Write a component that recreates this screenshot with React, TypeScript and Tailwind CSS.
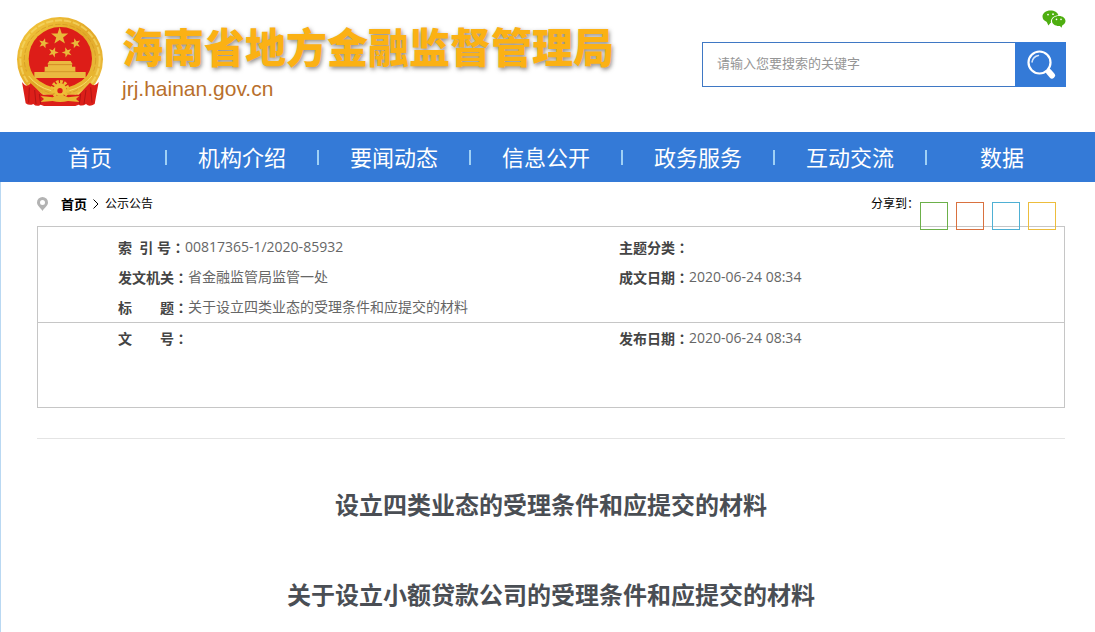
import type { ReactNode } from "react";

const navItems = ["首页", "机构介绍", "要闻动态", "信息公开", "政务服务", "互动交流", "数据"];

const shareLinks = [
  { name: "微信", border: "border-[#6cb04a]" },
  { name: "微博", border: "border-[#d9713f]" },
  { name: "QQ", border: "border-[#4fb0d4]" },
  { name: "QQ空间", border: "border-[#edbd3c]" },
];

function starPoints(cx: number, cy: number, r: number, turn = 0) {
  return Array.from({ length: 10 }, (_, i) => {
    const radius = i % 2 === 0 ? r : r * 0.4;
    const a = ((i * 36 - 90 + turn) * Math.PI) / 180;
    return `${(cx + radius * Math.cos(a)).toFixed(1)},${(cy + radius * Math.sin(a)).toFixed(1)}`;
  }).join(" ");
}

function Emblem() {
  return (
    <svg viewBox="48 48 264 276" className="h-[92px] w-[88px] shrink-0" aria-hidden="true">
      <defs>
        <linearGradient id="gold" x1="0" y1="0" x2="1" y2="1">
          <stop offset="0" stopColor="#f4c93f" />
          <stop offset="0.5" stopColor="#e3a928" />
          <stop offset="1" stopColor="#efc445" />
        </linearGradient>
      </defs>
      {/* Wheat wreath */}
      <ellipse cx="180" cy="178" rx="129" ry="127" fill="url(#gold)" />
      <ellipse cx="180" cy="178" rx="119" ry="117" fill="none" stroke="#f5d868" strokeOpacity="0.7" strokeWidth="6" strokeDasharray="22 5" />
      <ellipse cx="180" cy="178" rx="107" ry="105" fill="none" stroke="#cf9220" strokeOpacity="0.6" strokeWidth="3" strokeDasharray="16 6" />
      <circle cx="181" cy="176" r="95" fill="#dd1d18" />
      {/* Drapery */}
      <path
        d="M66 246 Q80 266 92 250 L128 284 L236 284 L270 248 Q284 264 296 246 L284 312 Q268 322 258 312 Q246 320 236 314 L226 318 L132 318 L122 314 Q110 322 100 312 Q88 318 77 310 Z"
        fill="#dc1f19"
      />
      <path d="M88 262 L86 308 M104 270 L108 312 M118 282 L122 312 M272 262 L276 308 M258 270 L252 312 M242 282 L238 312" stroke="#b31413" strokeWidth="3" fill="none" />
      {/* Stalks crossing under the gate */}
      <path d="M80 214 Q108 256 160 270 M282 214 Q254 256 202 270" stroke="#e8b52f" strokeWidth="14" fill="none" />
      <path d="M86 228 Q112 262 154 272 M276 228 Q250 262 208 272" stroke="#f7dc6a" strokeWidth="3" fill="none" />
      <circle cx="180" cy="268" r="23" fill="none" stroke="#edbb35" strokeWidth="10" strokeDasharray="8 4" />
      <circle cx="180" cy="268" r="19" fill="#efbe37" />
      <circle cx="180" cy="272" r="8" fill="#dd1d18" />
      <path d="M122 288 L158 292 Q180 278 204 292 L238 288 L228 297 L238 306 L204 303 Q180 309 158 303 L122 306 L132 297 Z" fill="#e9b633" />
      {/* Stars */}
      <g fill="#e9b93a">
        <polygon points={starPoints(179, 109, 27)} />
        <polygon points={starPoints(131, 130, 16, 15)} />
        <polygon points={starPoints(227, 130, 16, -15)} />
        <polygon points={starPoints(160, 157, 16, 20)} />
        <polygon points={starPoints(201, 157, 16, -20)} />
      </g>
      {/* Gate */}
      <g fill="#ebb940">
        <path d="M148 183 H212 L218 193 H142 Z" />
        <path d="M144 193 H216 V200 H226 V216 H134 V200 H144 Z" />
        <path d="M103 216 H257 V234 H103 Z" />
      </g>
      <path d="M144 194 H216 M134 215 H226" stroke="#c98a20" strokeWidth="2" />
    </svg>
  );
}

function WechatIcon() {
  return (
    <svg viewBox="0 0 24 18" className="h-[18px] w-6" aria-hidden="true">
      <path d="M8.5 0.5 C3.8 0.5 0.5 3.2 0.5 6.5 C0.5 8.8 2 10.8 4.5 11.8 L5 12.4 L6.4 15.4 L8.4 12.9 L9 12.8 C8.2 8.6 11.6 5.4 16.4 5.2 C15.6 2.4 12.4 0.5 8.5 0.5 Z" fill="#4eae10" />
      <path d="M17 6 C12.9 6 10 8.2 10 11 C10 13.8 12.9 16 17 16 L18 16 L19.4 17.8 L20.4 15.2 C22.2 14.4 23.5 12.8 23.5 11 C23.5 8.2 20.8 6 17 6 Z" fill="#4eae10" />
      <g fill="#fff">
        <circle cx="6" cy="4.6" r="0.9" />
        <circle cx="11" cy="4.2" r="0.9" />
        <circle cx="14.5" cy="9.4" r="0.8" />
        <circle cx="19" cy="9.4" r="0.8" />
      </g>
    </svg>
  );
}

function SearchIcon() {
  return (
    <svg viewBox="0 0 30 30" className="h-[30px] w-[30px]" fill="none" aria-hidden="true">
      <circle cx="13.5" cy="12.5" r="11" stroke="#fff" strokeWidth="2.2" />
      <path d="M6 12 Q7 6.5 12.5 5.5" stroke="#d4e5fb" strokeWidth="1.5" strokeLinecap="round" />
      <path d="M21 20 L23 22" stroke="#fff" strokeWidth="3" />
      <path d="M23 22 L26 25.5" stroke="#fff" strokeWidth="6" strokeLinecap="round" />
    </svg>
  );
}

function PinIcon() {
  return (
    <svg viewBox="0 0 11 14" className="h-[14px] w-[11px]" aria-hidden="true">
      <path
        d="M5.5 0 A5.5 5.5 0 0 1 11 5.5 C11 8.8 7.4 10.8 5.5 14 C3.6 10.8 0 8.8 0 5.5 A5.5 5.5 0 0 1 5.5 0 Z M5.5 3 A2.5 2.5 0 1 0 5.5 8 A2.5 2.5 0 1 0 5.5 3 Z"
        fill="#b3b3b3"
        fillRule="evenodd"
      />
    </svg>
  );
}

function Field({ label, children }: { label: string; children?: ReactNode }) {
  return (
    <div className="flex h-[30px]">
      <dt className="font-bold whitespace-pre text-[#444]">
        {label}
        <span className="font-['Noto_Sans_CJK_TC',sans-serif]">：</span>
      </dt>
      <dd>{children}</dd>
    </div>
  );
}

export default function App() {
  return (
    <div className="flex min-h-screen flex-col bg-white font-['Open_Sans','Noto_Sans_CJK_SC',sans-serif] text-black">
      <header className="flex h-[132px] items-start justify-between pr-[29px] pl-4">
        <a href="#" className="flex gap-[18px] pt-4">
          <Emblem />
          <div className="pt-[3px]">
            <h1 className="text-[41px] leading-[56px] font-black whitespace-nowrap text-[#fbb114] [text-shadow:1px_2px_4px_rgba(70,65,60,0.6)]">
              海南省地方金融监督管理局
            </h1>
            <p className="font-['Liberation_Sans',sans-serif] text-[21px] leading-7 text-[#b86f2c]">jrj.hainan.gov.cn</p>
          </div>
        </a>
        <div className="flex w-[364px] flex-col pt-[10px]">
          <a href="#" aria-label="微信" className="self-end">
            <WechatIcon />
          </a>
          <form className="mt-[14px] flex h-[45px]" onSubmit={(e) => e.preventDefault()}>
            <input
              type="text"
              aria-label="搜索"
              placeholder="请输入您要搜索的关键字"
              className="min-w-0 flex-1 border border-r-0 border-[#3f78c4] px-[14px] pb-[2px] text-[13px] outline-none placeholder:text-[#959595]"
            />
            <button type="submit" aria-label="搜索" className="flex w-[51px] items-center justify-center bg-[#347ad7]">
              <SearchIcon />
            </button>
          </form>
        </div>
      </header>

      <nav className="bg-[#347ad7] pr-[17px] pl-[14px]">
        <ul className="grid h-[50px] grid-cols-7 items-center">
          {navItems.map((item, i) => (
            <li key={item} className="relative text-center text-[22px] leading-[50px] text-white">
              <a href="#">{item}</a>
              {i < navItems.length - 1 && <span className="absolute top-[18px] -right-px h-[15px] w-[2px] bg-[#9fd0f5]" />}
            </li>
          ))}
        </ul>
      </nav>

      <main className="flex-1 border-l border-[#b9d8f2] pr-[30px] pb-6 pl-9">
        <div className="flex h-11 items-start justify-between pr-[9px] text-[12px] leading-[44px]">
          <div className="flex items-center">
            <PinIcon />
            <a href="#" className="ml-[13px] text-[13px] font-bold">
              首页
            </a>
            <svg viewBox="0 0 6 10" className="mx-[6px] h-[10px] w-[6px]" aria-hidden="true">
              <path d="M0.5 0.5 L5 5 L0.5 9.5" fill="none" stroke="#000" />
            </svg>
            <a href="#">公示公告</a>
          </div>
          <div className="flex items-start gap-2">
            <span className="-mr-[7px]">分享到：</span>
            {shareLinks.map((s) => (
              <a key={s.name} href="#" aria-label={s.name} className={`relative mt-5 h-7 w-7 border ${s.border}`} />
            ))}
          </div>
        </div>

        <div className="border border-[#c6c6c6] text-[14px] leading-[30px] text-[#666]">
          <dl className="grid h-24 grid-cols-[501px_1fr] content-start border-b border-[#c6c6c6] pt-[5px] pl-20">
            <Field label={"索  引 号"}>00817365-1/2020-85932</Field>
            <Field label="主题分类" />
            <Field label="发文机关">省金融监管局监管一处</Field>
            <Field label="成文日期">2020-06-24 08:34</Field>
            <Field label="标　　题">关于设立四类业态的受理条件和应提交的材料</Field>
          </dl>
          <dl className="grid h-21 grid-cols-[501px_1fr] content-start pl-20">
            <Field label="文　　号" />
            <Field label="发布日期">2020-06-24 08:34</Field>
          </dl>
        </div>

        <hr className="mt-[30px] border-[#e4e4e4]" />

        <article className="mt-[51px] flex flex-col gap-[60px] text-center text-[24px] leading-[30px] font-bold text-[#4a4e54]">
          <h2>设立四类业态的受理条件和应提交的材料</h2>
          <h2>关于设立小额贷款公司的受理条件和应提交的材料</h2>
        </article>
      </main>
    </div>
  );
}
